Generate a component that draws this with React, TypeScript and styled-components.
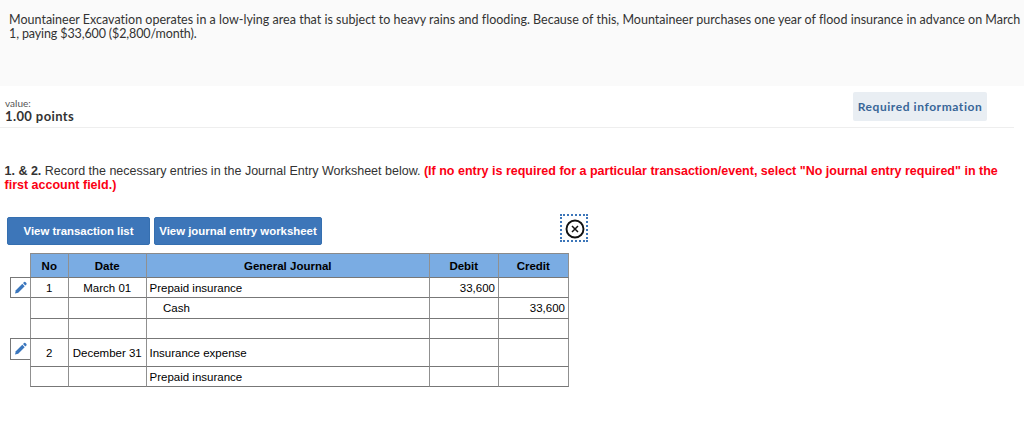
import React from "react";
import styled, { createGlobalStyle } from "styled-components";

type Align = "left" | "center" | "right";

type JournalRow = {
  no?: string;
  date?: string;
  account?: string;
  indent?: boolean;
  debit?: string;
  credit?: string;
  height: number;
  editable?: boolean;
};

const rows: JournalRow[] = [
  {
    no: "1",
    date: "March 01",
    account: "Prepaid insurance",
    debit: "33,600",
    height: 20,
    editable: true,
  },
  { account: "Cash", indent: true, credit: "33,600", height: 21 },
  { height: 20 },
  {
    no: "2",
    date: "December 31",
    account: "Insurance expense",
    height: 28,
    editable: true,
  },
  { account: "Prepaid insurance", height: 20 },
];

function PencilIcon() {
  return (
    <svg width="14" height="14" viewBox="0 0 14 14" fill="#3a76bd">
      <path d="M1 12.5 L1.8 9.3 L8.3 2.8 L10.7 5.2 L4.2 11.7 Z" />
      <path d="M9 2.1 L10.1 1 Q10.7 0.5 11.3 1 L12.4 2.1 Q12.9 2.7 12.4 3.3 L11.3 4.4 Z" />
    </svg>
  );
}

function CloseIcon() {
  return (
    <svg width="20" height="20" viewBox="0 0 20 20" fill="none" stroke="#111">
      <circle cx="10" cy="10" r="8.5" strokeWidth="1.9" />
      <path d="M7 7 L13 13 M13 7 L7 13" strokeWidth="1.5" />
    </svg>
  );
}

export default function App() {
  return (
    <>
      <GlobalStyle />
      <Page>
        <Intro>
          <IntroLine spacing={0.01}>
            Mountaineer Excavation operates in a low-lying area that is subject
            to heavy rains and flooding. Because of this, Mountaineer purchases
            one year of flood insurance in advance on March
          </IntroLine>
          <IntroLine spacing={-0.12}>
            1, paying $33,600 ($2,800/month).
          </IntroLine>
        </Intro>
        <PointsBar>
          <div>
            <ValueLabel>value:</ValueLabel>
            <Points>1.00 points</Points>
          </div>
          <RequiredButton>Required information</RequiredButton>
        </PointsBar>
        <Instructions>
          <b>1. &amp; 2.</b> Record the necessary entries in the Journal Entry
          Worksheet below.{" "}
          <Warning>
            (If no entry is required for a particular transaction/event, select
            "No journal entry required" in the
            <br />
            first account field.)
          </Warning>
        </Instructions>
        <Toolbar>
          <ViewButton width={143}>View transaction list</ViewButton>
          <ViewButton width={168}>View journal entry worksheet</ViewButton>
          <CloseButton aria-label="Close">
            <CloseIcon />
          </CloseButton>
        </Toolbar>
        <Journal>
          <Row height={24}>
            <EditSlot />
            <HeadCell>No</HeadCell>
            <HeadCell>Date</HeadCell>
            <HeadCell>General Journal</HeadCell>
            <HeadCell>Debit</HeadCell>
            <HeadCell>Credit</HeadCell>
          </Row>
          {rows.map((row, index) => (
            <Row key={index} height={row.height}>
              <EditSlot>
                {row.editable && (
                  <EditButton tall={index > 0} aria-label="Edit">
                    <PencilIcon />
                  </EditButton>
                )}
              </EditSlot>
              <Cell align="center">{row.no}</Cell>
              <Cell align="center">{row.date}</Cell>
              <Cell align="left" indent={row.indent}>
                {row.account}
              </Cell>
              <Cell align="right">{row.debit}</Cell>
              <Cell align="right">{row.credit}</Cell>
            </Row>
          ))}
        </Journal>
      </Page>
    </>
  );
}

const GlobalStyle = createGlobalStyle`
  * {
    box-sizing: border-box;
  }
  body {
    margin: 0;
    background: #fff;
    font-family: "Liberation Sans", Arial, sans-serif;
  }
`;

const Page = styled.main`
  width: 1024px;
  height: 432px;
  overflow: hidden;
`;

const Intro = styled.section`
  height: 86px;
  padding: 13px 0 0 9px;
  background: #fafafa;
  color: #333;
  font-family: Lato, sans-serif;
  font-size: 12.5px;
  line-height: 14px;
`;

const IntroLine = styled.div<{ spacing: number }>`
  letter-spacing: ${(props) => props.spacing}px;
  font-variant-ligatures: none;
  white-space: nowrap;
`;

const PointsBar = styled.header`
  display: flex;
  justify-content: space-between;
  width: 1014px;
  height: 42px;
  padding: 6px 27px 0 5px;
  border-bottom: 1px solid #eee;
  font-family: Lato, sans-serif;
`;

const ValueLabel = styled.div`
  margin-top: 5px;
  color: #555;
  font-size: 10px;
  line-height: 13px;
`;

const Points = styled.div`
  color: #333;
  font-size: 13px;
  font-weight: 700;
  letter-spacing: 0.4px;
  line-height: 13px;
`;

const RequiredButton = styled.button`
  width: 134px;
  height: 29px;
  padding: 0;
  border: none;
  border-radius: 2px;
  background: #e9eef3;
  color: #386698;
  font-family: Lato, sans-serif;
  font-size: 12px;
  font-weight: 700;
  letter-spacing: 0.57px;
  white-space: nowrap;
`;

const Instructions = styled.p`
  margin: 36px 0 0 4.5px;
  color: #333;
  font-size: 12.5px;
  line-height: 14px;
  white-space: nowrap;
`;

const Warning = styled.b`
  color: #fb0013;
`;

const Toolbar = styled.div`
  display: flex;
  gap: 4px;
  margin: 22px 0 0 7px;
`;

const ViewButton = styled.button<{ width: number }>`
  width: ${(props) => props.width}px;
  height: 28px;
  margin-top: 3px;
  padding: 0;
  border: 1px solid #356fb0;
  border-radius: 2px;
  background: #3d76b9;
  color: #fff;
  font-family: "Liberation Sans", Arial, sans-serif;
  font-size: 11.4px;
  font-weight: 700;
  white-space: nowrap;
`;

const CloseButton = styled.button`
  display: flex;
  align-items: center;
  justify-content: center;
  width: 28px;
  height: 28px;
  margin-left: 234px;
  padding: 1px 0 0 1px;
  border: 2px dotted #3d76b9;
  background: #fff;
`;

const Journal = styled.div`
  width: 559px;
  margin: 9px 0 0 10px;
  color: #000;
  font-size: 11.5px;
`;

const Row = styled.div<{ height: number }>`
  display: grid;
  grid-template-columns: 20px 39px 78px 283px 69px 70px;
  height: ${(props) => props.height}px;
`;

const EditSlot = styled.div`
  margin-top: -1px;
`;

const EditButton = styled.button<{ tall: boolean }>`
  display: flex;
  align-items: center;
  justify-content: center;
  width: 21px;
  height: ${(props) => (props.tall ? 22 : 21)}px;
  padding: 0;
  border: 1px solid #777;
  background: #fff;
`;

const Cell = styled.div<{ align: Align; indent?: boolean }>`
  display: flex;
  align-items: center;
  justify-content: ${(props) => props.align};
  padding: 0 3px 0 ${(props) => (props.indent ? 16 : 2.5)}px;
  border-right: 1px solid #909090;
  border-bottom: 1px solid #777;
  white-space: nowrap;
  &:nth-child(2) {
    border-left: 1px solid #909090;
  }
`;

const HeadCell = styled(Cell).attrs({ align: "center" as Align })`
  height: 25px;
  margin-top: -1px;
  border-top: 1px solid #8a8a8a;
  background: #7aace3;
  font-weight: 700;
`;
